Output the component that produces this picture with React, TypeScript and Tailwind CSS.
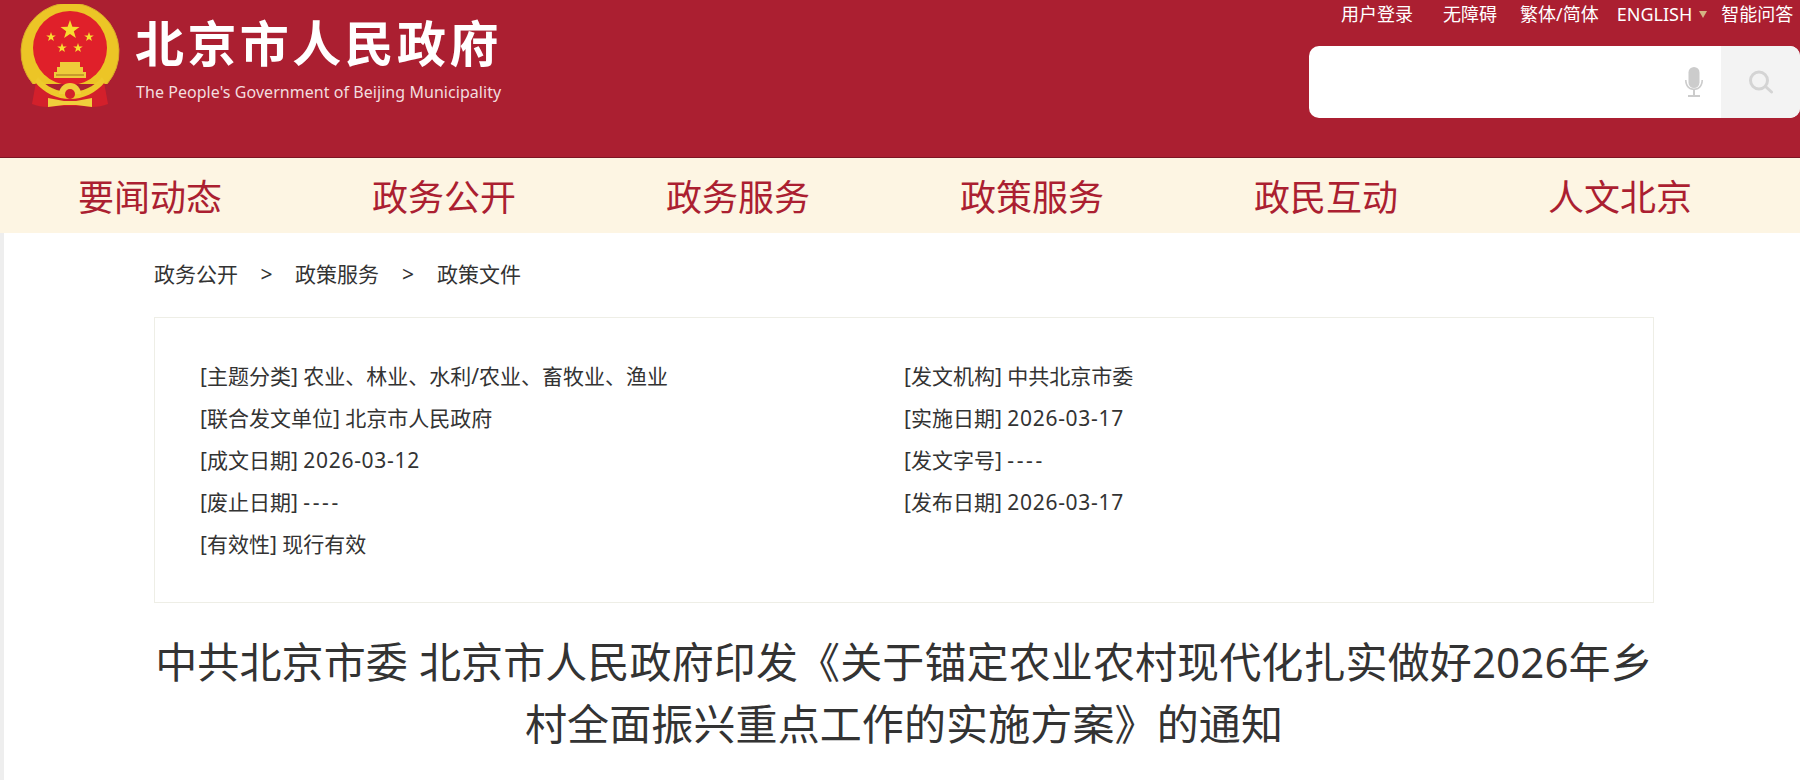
const navItems = ['要闻动态', '政务公开', '政务服务', '政策服务', '政民互动', '人文北京'];

const metaLeft = [
  ['[主题分类]', '农业、林业、水利/农业、畜牧业、渔业'],
  ['[联合发文单位]', '北京市人民政府'],
  ['[成文日期]', '2026-03-12'],
  ['[废止日期]', '----'],
  ['[有效性]', '现行有效'],
];

const metaRight = [
  ['[发文机构]', '中共北京市委'],
  ['[实施日期]', '2026-03-17'],
  ['[发文字号]', '----'],
  ['[发布日期]', '2026-03-17'],
];

function star(cx: number, cy: number, r: number) {
  const pts: string[] = [];
  for (let i = 0; i < 10; i++) {
    const rad = i % 2 === 0 ? r : r * 0.4;
    const a = (Math.PI / 5) * i - Math.PI / 2;
    pts.push(`${(cx + rad * Math.cos(a)).toFixed(1)},${(cy + rad * Math.sin(a)).toFixed(1)}`);
  }
  return pts.join(' ');
}

function Emblem() {
  return (
    <svg width="100" height="108" viewBox="0 0 100 108" className="shrink-0">
      {/* wreath */}
      <path d="M13 80A49 49 0 1 1 87 80Z" fill="#ecc526" />
      <path d="M13 80A49 49 0 1 1 87 80" fill="none" stroke="#d9a92b" strokeWidth="1" />
      <circle cx="50" cy="44" r="37" fill="#e0202a" />
      {/* stars */}
      <polygon points={star(50, 26, 10)} fill="#f8dc30" />
      <polygon points={star(31, 33, 5)} fill="#f8dc30" />
      <polygon points={star(69, 33, 5)} fill="#f8dc30" />
      <polygon points={star(42, 44, 5)} fill="#f8dc30" />
      <polygon points={star(58, 44, 5)} fill="#f8dc30" />
      {/* gate */}
      <path d="M40 58h20v5h3v5h3v6H34v-6h3v-5h3z" fill="#eecb3a" />
      <path d="M36 70h28v2H36z" fill="#c99a2c" />
      {/* ribbons */}
      <path d="M16 78c10 10 22 16 34 16s24-6 34-16l4 22c-8 3-16 4-24 2H36c-8 2-16 1-24-2z" fill="#d3202b" />
      <path d="M18 73c8 10 20 15 32 15s24-5 32-15l3 5c-9 11-22 17-35 17S24 89 15 78z" fill="#eec92c" />
      {/* gear and knot */}
      <path d="M39 90a11 11 0 0 1 22 0z" fill="#f0cf3c" />
      <circle cx="50" cy="90" r="5" fill="#d3202b" />
      <path d="M28 94l16 3h12l16-3v9l-16-2H44l-16 2z" fill="#f0cf3c" />
    </svg>
  );
}

function MetaValue({ value }: { value: string }) {
  // latin values sit wider in the original font
  if (value === '----') return <span className="tracking-[2.6px]">{value}</span>;
  if (value.startsWith('2026')) return <span className="tracking-[0.7px]">{value}</span>;
  return <span>{value}</span>;
}

export default function App() {
  return (
    <div className="h-[780px] overflow-hidden bg-white font-['Noto_Sans','Noto_Sans_CJK_SC',sans-serif] text-[#333]">
      {/* Header */}
      <div className="flex h-[158px] justify-between border-b border-[#7d1524] bg-[#ab1f31] text-white">
        <div className="flex items-start pl-[20px] pt-[4px]">
          <Emblem />
          <div className="ml-[15px]">
            <div className="mt-[11px] text-[49px] font-bold leading-[56px] tracking-[3.4px]">北京市人民政府</div>
            <div className="mt-[8px] pl-[1px] text-[16px] leading-[26px] tracking-[0.05px] text-[#f3dcdf]">The People's Government of Beijing Municipality</div>
          </div>
        </div>
        <div className="flex w-[510px] flex-col items-end">
          <div className="flex h-[28px] w-full items-center pl-[51px] text-[18px] leading-[28px]">
            <span>用户登录</span>
            <span className="ml-[30px]">无障碍</span>
            <span className="ml-[23px]">繁体/简体</span>
            <span className="ml-[18px]">ENGLISH</span>
            <span className="ml-[7px] h-0 w-0 border-x-[4px] border-t-[7px] border-x-transparent border-t-[#d4b483]" />
            <span className="ml-[14px] whitespace-nowrap">智能问答</span>
          </div>
          <div className="mt-[18px] flex h-[72px] w-[491px] overflow-hidden rounded-[10px] bg-white">
            <div className="flex flex-1 items-center justify-end pr-[18px]">
              <svg width="18" height="30" viewBox="0 0 18 30" fill="#cccccc">
                <rect x="3.500" y="0" width="11" height="21" rx="5.500" />
                <path d="M0 13h1.600c0 5 3 8.500 7.400 8.500s7.400-3.500 7.400-8.500H18c0 6-3.400 9.700-8 10.100V28h5v2H3v-2h5v-4.900C3.400 22.700 0 19 0 13z" />
              </svg>
            </div>
            <div className="flex w-[79px] items-center justify-center bg-[#f3f3f3]">
              <svg width="26" height="24" viewBox="0 0 26 24" fill="none" stroke="#d4d4d4" strokeWidth="3">
                <circle cx="11" cy="10.500" r="8.500" />
                <path d="M17.500 16.500l6 5.500" strokeLinecap="round" />
              </svg>
            </div>
          </div>
        </div>
      </div>

      {/* Nav */}
      <div className="flex h-[75px] items-center gap-[150px] bg-[#fdf5e3] pl-[78px] pt-[5px] text-[36px] leading-[70px] text-[#ab1f31]">
        {navItems.map((item) => (
          <span key={item} className="w-[144px] whitespace-nowrap">{item}</span>
        ))}
      </div>

      {/* Body */}
      <div className="h-[547px] border-l-[4px] border-[#eeeeee] pl-[150px]">
        <div className="flex h-[84px] items-center text-[21px]">
          <span>政务公开</span>
          <span className="mx-[22.500px]">&gt;</span>
          <span>政策服务</span>
          <span className="mx-[23px]">&gt;</span>
          <span>政策文件</span>
        </div>

        <div className="flex h-[286px] w-[1500px] border border-[#eeeee6] pl-[45px] pt-[37px] text-[21px] leading-[42px]">
          <div className="w-[704px]">
            {metaLeft.map(([label, value]) => (
              <div key={label}>{label} <MetaValue value={value} /></div>
            ))}
          </div>
          <div>
            {metaRight.map(([label, value]) => (
              <div key={label}>{label} <MetaValue value={value} /></div>
            ))}
          </div>
        </div>

        <h1 className="mt-[28px] w-[1500px] text-center text-[42px] leading-[62px] tracking-[0.12px]">
          中共北京市委 北京市人民政府印发《关于锚定农业农村现代化扎实做好2026年乡村全面振兴重点工作的实施方案》的通知
        </h1>
      </div>
    </div>
  );
}
